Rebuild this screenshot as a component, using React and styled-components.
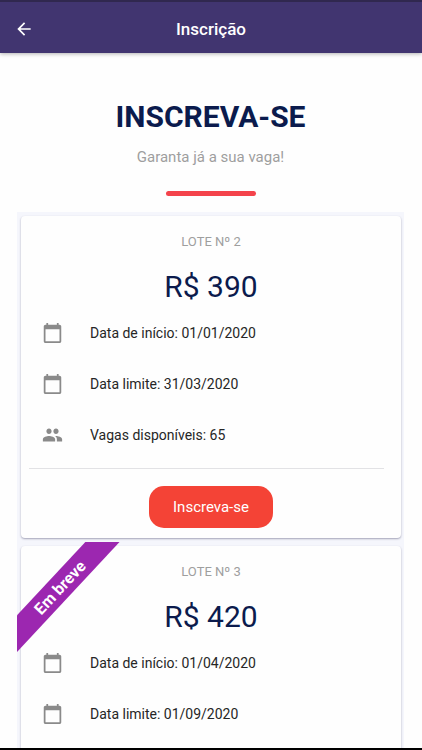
import React from "react"
import styled, { createGlobalStyle } from "styled-components"
import { MdArrowBack, MdCalendarToday, MdPeople } from "react-icons/md"

const GlobalStyle = createGlobalStyle`
  * {
    box-sizing: border-box;
  }
  body {
    margin: 0;
    background: #fefefe;
    color: #262626;
    font-family: Roboto, "Liberation Sans", sans-serif;
  }
`

const Screen = styled.div`
  height: 100vh;
  display: flex;
  flex-direction: column;
  overflow: hidden;
  border-bottom: 2px solid #000;
`

const AppBar = styled.header`
  display: grid;
  grid-template-columns: 48px 1fr 48px;
  align-items: center;
  flex: none;
  height: 53px;
  padding-top: 2px;
  background: #413570;
  border-top: 2px solid #30284f;
  box-shadow: 0 1px 4px rgba(0, 0, 0, 0.3);
  color: #fff;
  z-index: 1;
`

const BackButton = styled.button`
  display: grid;
  place-items: center;
  height: 48px;
  padding: 0;
  border: 0;
  background: none;
  color: inherit;
  font-size: 20px;
  cursor: pointer;
`

const AppTitle = styled.h1`
  margin: 0;
  font-size: 17px;
  font-weight: 500;
  line-height: 24px;
  text-align: center;
`

const Content = styled.main`
  flex: 1;
  min-height: 0;
  overflow-y: auto;
  scrollbar-width: none;
  padding: 44px 18px 0 17px;
`

const Intro = styled.section`
  display: flex;
  flex-direction: column;
  align-items: center;
  margin-bottom: 16px;
`

const Headline = styled.h2`
  margin: 0;
  color: #0b1b4d;
  font-size: 30px;
  font-weight: 700;
  line-height: 40px;
`

const Tagline = styled.p`
  margin: 8px 0 22px;
  color: #9e9e9e;
  font-size: 15px;
  line-height: 24px;
`

const Accent = styled.div`
  width: 90px;
  height: 5px;
  border-radius: 3px;
  background: #f4434b;
`

const LotItem = styled.article`
  position: relative;
  overflow: hidden;
  padding: 4px 3px 4px 4px;
  background: #f5f6fc;
`

const Card = styled.div`
  display: flex;
  flex-direction: column;
  padding: 16px 0 10px;
  border-radius: 4px;
  background: #fefefe;
  box-shadow: 0 1px 2px rgba(40, 40, 80, 0.4);
`

const LotName = styled.h3`
  margin: 0;
  color: #9e9e9e;
  font-size: 13px;
  font-weight: 400;
  line-height: 20px;
  text-align: center;
`

const Price = styled.p`
  margin: 15px 0 0;
  color: #0b1b4d;
  font-size: 30px;
  line-height: 40px;
  text-align: center;
`

const Details = styled.ul`
  margin: 0 17px 0 8px;
  padding: 0 0 8px;
  border-bottom: 1px solid #e2e2e5;
  list-style: none;
`

const Detail = styled.li`
  display: flex;
  align-items: center;
  gap: 27px;
  height: 51px;
  padding-left: 13px;
  font-size: 14px;
  line-height: 20px;

  svg {
    flex: none;
    width: 21px;
    height: 22px;
    color: #8a8a8a;
  }
`

const SubscribeButton = styled.button`
  align-self: center;
  height: 42px;
  margin-top: 17px;
  padding: 0 24px;
  border: 0;
  border-radius: 15px;
  background: #f44336;
  color: #fff;
  font-family: inherit;
  font-size: 15px;
  cursor: pointer;
`

const Ribbon = styled.div`
  position: absolute;
  top: 33px;
  left: -47px;
  width: 180px;
  background: #9c27b0;
  color: #fff;
  font-size: 16px;
  font-weight: 700;
  line-height: 25px;
  text-align: center;
  transform: rotate(-47deg);
`

const lots = [
  { number: 2, price: 390, start: "01/01/2020", end: "31/03/2020", seats: 65 },
  { number: 3, price: 420, start: "01/04/2020", end: "01/09/2020", seats: 80, soon: true },
]

const Lot = ({ number, price, start, end, seats, soon }) => {
  return (
    <LotItem>
      <Card>
        <LotName>LOTE Nº {number}</LotName>
        <Price>R$ {price}</Price>
        <Details>
          <Detail><MdCalendarToday preserveAspectRatio="none" />Data de início: {start}</Detail>
          <Detail><MdCalendarToday preserveAspectRatio="none" />Data limite: {end}</Detail>
          <Detail><MdPeople preserveAspectRatio="none" />Vagas disponíveis: {seats}</Detail>
        </Details>
        <SubscribeButton type="button" disabled={soon}>Inscreva-se</SubscribeButton>
      </Card>
      {soon && <Ribbon>Em breve</Ribbon>}
    </LotItem>
  )
}

const App = () => {
  return (
    <Screen>
      <GlobalStyle />
      <AppBar>
        <BackButton type="button" aria-label="Voltar"><MdArrowBack /></BackButton>
        <AppTitle>Inscrição</AppTitle>
      </AppBar>
      <Content>
        <Intro>
          <Headline>INSCREVA-SE</Headline>
          <Tagline>Garanta já a sua vaga!</Tagline>
          <Accent />
        </Intro>
        {lots.map(lot => <Lot key={lot.number} {...lot} />)}
      </Content>
    </Screen>
  )
}

export default App
